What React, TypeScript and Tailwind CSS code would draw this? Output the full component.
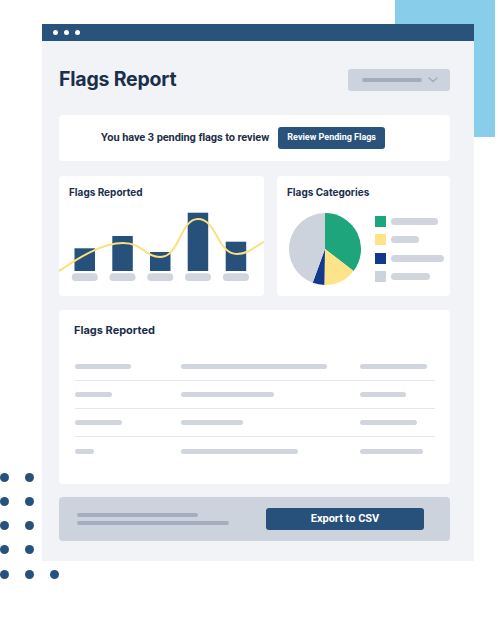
import React from "react";

const inter = { fontFamily: "Inter, 'Noto Sans', sans-serif" };
const roboto = { fontFamily: "Roboto, 'Noto Sans', sans-serif" };

function Bar({ w, h = 5, color = "bg-[#d0d5de]" }: { w: number; h?: number; color?: string }) {
  return <div className={`rounded-full ${color}`} style={{ width: w, height: h }} />;
}

const tableRows: [number, number, number][] = [
  [56, 146, 67],
  [37, 93, 46],
  [47, 62, 57],
  [19, 117, 63],
];

const legend: [string, number][] = [
  ["bg-[#1ea57b]", 47],
  ["bg-[#fde488]", 28],
  ["bg-[#12398c]", 53],
  ["bg-[#cdd3dd]", 39],
];

export default function App() {
  const bars = [
    { x: 15.5, top: 44.3 },
    { x: 53.3, top: 32 },
    { x: 91, top: 48 },
    { x: 128.7, top: 8.7 },
    { x: 166.7, top: 37.7 },
  ];
  return (
    <div className="relative w-[500px] h-[620px] bg-white overflow-hidden" style={inter}>
      {/* decorative light blue block */}
      <div className="absolute left-[395px] top-0 w-[100px] h-[137px] bg-[#88cdea]" />
      {/* decorative dots */}
      <div className="absolute left-[-0.5px] top-[472.5px] flex flex-col gap-[15.25px]">
        {[0, 1, 2, 3].map((r) => (
          <div key={r} className="flex gap-[16px]">
            <div className="w-[9px] h-[9px] rounded-full bg-[#27507a]" />
            <div className="w-[9px] h-[9px] rounded-full bg-[#27507a]" />
          </div>
        ))}
        <div className="flex gap-[16px]">
          <div className="w-[9px] h-[9px] rounded-full bg-[#27507a]" />
          <div className="w-[9px] h-[9px] rounded-full bg-[#27507a]" />
          <div className="w-[9px] h-[9px] rounded-full bg-[#27507a]" />
        </div>
      </div>

      <div className="relative pt-[24px] pl-[42px]">
        <div className="w-[432px] bg-[#f1f3f7]">
          {/* title bar */}
          <div className="h-[17px] bg-[#29537b] flex items-center gap-[6px] pl-[10.5px]">
            <div className="w-[5px] h-[5px] rounded-full bg-white" />
            <div className="w-[5px] h-[5px] rounded-full bg-white" />
            <div className="w-[5px] h-[5px] rounded-full bg-white" />
          </div>

          <div className="pl-[17px] pr-[24px] pb-[20px]">
            {/* heading row */}
            <div className="flex items-center justify-between pt-[28px]">
              <h1 className="text-[19.5px] leading-[22px] font-bold text-[#1b2e4b] tracking-[-0.2px] -mt-[3px]">Flags Report</h1>
              <div className="w-[102px] h-[22px] rounded-[3px] bg-[#cdd3dd] flex items-center pl-[14px]">
                <Bar w={60} h={4} color="bg-[#a3acbd]" />
                <svg width="10" height="6" viewBox="0 0 10 6" className="ml-[6px]">
                  <path d="M1 1 L5 4.5 L9 1" fill="none" stroke="#a3acbd" strokeWidth="1.6" strokeLinecap="round" strokeLinejoin="round" />
                </svg>
              </div>
            </div>

            {/* pending card */}
            <div className="mt-[24px] h-[46px] bg-white rounded-[4px] flex items-center pl-[42px]">
              <span className="text-[11px] font-bold text-[#1f2f48] tracking-[-0.1px]" style={roboto}>
                You have 3 pending flags to review
              </span>
              <div className="ml-[9px] w-[107px] h-[22px] rounded-[3px] bg-[#29537b] flex items-center justify-center">
                <span className="text-[9px] font-bold text-white" style={roboto}>Review Pending Flags</span>
              </div>
            </div>

            {/* charts row */}
            <div className="mt-[15px] flex gap-[13px]">
              <div className="w-[205px] h-[120px] bg-white rounded-[4px] overflow-hidden flex flex-col">
                <div className="h-[28px] pl-[10px] pt-[10px] text-[10px] leading-[12px] font-bold text-[#1b2e4b]">Flags Reported</div>
                <svg width="205" height="92" viewBox="0 0 205 92">
                  {bars.map((b, i) => (
                    <g key={i}>
                      <rect x={b.x} y={b.top} width={20.5} height={67 - b.top} fill="#27507a" />
                      <rect x={b.x + 10.25 - 13} y={69.3} width={26} height={7.7} rx={3.85} fill="#d0d5de" />
                    </g>
                  ))}
                  <path
                    d="M0,67 C14,58 40,39 64,39 C84,39 86,53 101,53 C121,53 121,15 139,15 C158,15 158,50 178,50 C190,50 196,42 205,38"
                    fill="none"
                    stroke="#fbe07f"
                    strokeWidth="2"
                  />
                </svg>
              </div>

              <div className="w-[173px] h-[120px] bg-white rounded-[4px] flex flex-col">
                <div className="h-[28px] pl-[10px] pt-[10px] text-[10px] leading-[12px] font-bold text-[#1b2e4b]">Flags Categories</div>
                <div className="flex pl-[12px]">
                  <svg width="72" height="72" viewBox="0 0 72 72" className="mt-[8.5px]">
                    <path d="M36,36 L36,0 A36,36 0 0 1 64.56,57.92 Z" fill="#1ea57b" />
                    <path d="M36,36 L64.56,57.92 A36,36 0 0 1 35.37,71.99 Z" fill="#fde488" />
                    <path d="M36,36 L35.37,71.99 A36,36 0 0 1 23.69,69.83 Z" fill="#12398c" />
                    <path d="M36,36 L23.69,69.83 A36,36 0 0 1 36,0 Z" fill="#cdd3dd" />
                  </svg>
                  <div className="ml-[14px] mt-[12px] flex flex-col gap-[7.3px]">
                    {legend.map(([c, w], i) => (
                      <div key={i} className="flex items-center gap-[5px]">
                        <div className={`w-[11px] h-[11px] ${c}`} />
                        <Bar w={w} h={7} />
                      </div>
                    ))}
                  </div>
                </div>
              </div>
            </div>

            {/* table card */}
            <div className="mt-[14px] h-[174px] bg-white rounded-[4px] pl-[16px] pr-[15px]">
              <div className="pt-[13px] text-[11px] leading-[14px] font-bold text-[#1b2e4b] -ml-[1px]">Flags Reported</div>
              <div className="mt-[16px]">
                {tableRows.map((r, i) => (
                  <div
                    key={i}
                    className={`h-[28px] grid grid-cols-[106px_179px_1fr] items-center ${i < 3 ? "border-b-[1.5px] border-[#e3e7ee]" : ""}`}
                  >
                    <Bar w={r[0]} />
                    <Bar w={r[1]} />
                    <Bar w={r[2]} />
                  </div>
                ))}
              </div>
            </div>

            {/* export bar */}
            <div className="mt-[13px] h-[44px] bg-[#cdd3dd] rounded-[4px] flex items-center justify-between pl-[18px] pr-[26px]">
              <div className="flex flex-col gap-[4px]">
                <Bar w={121} h={4} color="bg-[#a4aec0]" />
                <Bar w={152} h={4} color="bg-[#a4aec0]" />
              </div>
              <div className="w-[158px] h-[22px] rounded-[3px] bg-[#27507a] flex items-center justify-center">
                <span className="text-[11px] font-bold text-white" style={roboto}>Export to CSV</span>
              </div>
            </div>
          </div>
        </div>
      </div>
    </div>
  );
}
